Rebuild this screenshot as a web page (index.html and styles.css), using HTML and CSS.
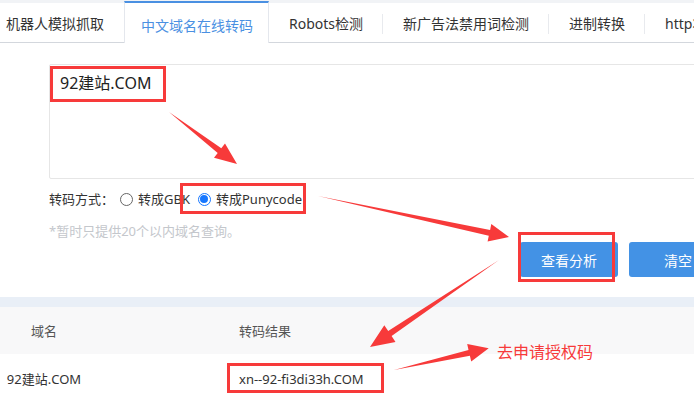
FILE: index.html
```html
<!DOCTYPE html>
<html lang="zh-CN">
<head>
<meta charset="utf-8">
<title>中文域名在线转码</title>
<link rel="stylesheet" href="styles.css">
</head>
<body>
<div class="page">
  <nav class="tabbar">
    <div class="tabs">
      <div class="tab">机器人模拟抓取</div>
      <div class="tab active">中文域名在线转码</div>
      <div class="tab sep">Robots检测</div>
      <div class="tab sep">新广告法禁用词检测</div>
      <div class="tab sep">进制转换</div>
      <div class="tab">http状态查询</div>
    </div>
  </nav>

  <section class="form">
    <div class="textarea">92建站.COM</div>
    <div class="opts">
      <span class="label">转码方式：</span>
      <span class="radio"></span><span class="rtext">转成GBK</span>
      <span class="radio on"></span><span class="rtext">转成Punycode</span>
    </div>
    <div class="hint">*暂时只提供20个以内域名查询。</div>
    <div class="btns">
      <button class="btn">查看分析</button>
      <button class="btn">清空</button>
    </div>
  </section>

  <div class="band"></div>

  <div class="table">
    <div class="thead">
      <div class="c1">域名</div>
      <div class="c2">转码结果</div>
    </div>
    <div class="trow">
      <div class="c1">92建站.COM</div>
      <div class="c2">xn--92-fi3di33h.COM</div>
    </div>
  </div>

  <div class="note">
    <div class="mark m1"></div>
    <div class="mark m2"></div>
    <div class="mark m3"></div>
    <div class="mark m4"></div>
    <div class="callout">去申请授权码</div>
    <svg class="arrows" width="694" height="399" viewBox="0 0 694 399">
      <polygon points="169,112 221.3,148.2 225,143.5 237,164 214,157.7 217.7,153"/>
      <polygon points="318,196 490.1,229.9 491.3,224 509,237 487.6,241.6 488.8,235.7"/>
      <polygon points="499,260 388.2,331.1 384.3,325.3 370,347 395.5,341.9 391.6,336.1"/>
      <polygon points="394,370 468.5,349.9 467.2,344 488.7,348.3 471.2,361.6 469.9,355.7"/>
    </svg>
  </div>
</div>
</body>
</html>
```

FILE: styles.css
```css
* { box-sizing: border-box; }
html, body { margin: 0; padding: 0; background: #fff; }
body {
  font-family: "Noto Sans", "Noto Sans CJK SC", sans-serif;
  color: #333;
  overflow: hidden;
  width: 694px;
  height: 399px;
}
.page { position: relative; width: 694px; height: 399px; overflow: hidden; }

.tabbar {
  border-top: 3px solid #f1f3f6;
  border-bottom: 1px solid #d3d7dd;
  height: 43px;
  overflow: visible;
}
.tabs {
  display: flex;
  height: 39px;
  margin-left: -14px;
  white-space: nowrap;
}
.tab {
  position: relative;
  display: flex;
  align-items: center;
  padding: 3px 20px 0;
  font-size: 14px;
  line-height: 20px;
  color: #333;
}
.tab.active {
  margin-top: -2px;
  height: 42px;
  padding: 5px 15px 0 16px;
  border-top: 2px solid #4a90e2;
  border-left: 1px solid #e4e7ed;
  border-right: 1px solid #e4e7ed;
  background: #fff;
  color: #4a90e2;
}
.tab.sep::after {
  content: "";
  position: absolute;
  right: 0;
  top: 11px;
  height: 20px;
  width: 1px;
  background: #e8eaee;
}

.form { padding: 21px 0 0 49px; }
.textarea {
  width: 700px;
  height: 115px;
  border: 1px solid #e6e6e6;
  border-radius: 2px;
  padding: 6px 10px;
  font-size: 16px;
  line-height: 24px;
  color: #222;
}
.opts {
  display: flex;
  align-items: center;
  margin-top: 10px;
  height: 20px;
  font-size: 13px;
  line-height: 20px;
  color: #333;
}
.label { margin-right: 6px; }
.radio {
  width: 13px;
  height: 13px;
  border: 1px solid #666;
  border-radius: 50%;
  margin-right: 5px;
  display: inline-flex;
  align-items: center;
  justify-content: center;
  background: #fff;
}
.radio.on { border-color: #1677ff; }
.radio.on::after {
  content: "";
  width: 8px;
  height: 8px;
  border-radius: 50%;
  background: #1677ff;
}
.rtext { margin-right: 8px; }
.hint {
  margin-top: 12px;
  font-size: 13px;
  line-height: 20px;
  color: #c4c7cc;
}
.btns {
  display: flex;
  gap: 11px;
  margin-top: 1px;
  padding-left: 471px;
}
.btn {
  flex: 0 0 98px;
  height: 35px;
  border: 0;
  border-radius: 3px;
  background: #4392e5;
  color: #fff;
  font-family: inherit;
  font-size: 14px;
  padding: 0;
}

.band {
  margin-top: 20px;
  height: 10px;
  background: #e9eff7;
}
.table { font-size: 13px; line-height: 20px; }
.thead, .trow { display: grid; grid-template-columns: 88px 1fr; }
.thead { height: 47px; align-items: center; background: #f8f8f9; color: #555; }
.trow { height: 50px; align-items: center; color: #333; }
.c1 { text-align: center; }
.c2 { padding-left: 151px; }

.note { position: absolute; inset: 0; pointer-events: none; }
.mark { position: absolute; border: 3px solid #f73a3a; }
.m1 { left: 50px; top: 66px; width: 116px; height: 36px; }
.m2 { left: 180px; top: 183px; width: 126px; height: 31px; }
.m3 { left: 518px; top: 232px; width: 97px; height: 50px; }
.m4 { left: 227px; top: 363px; width: 157px; height: 30px; }
.callout {
  position: absolute;
  left: 497px;
  top: 341px;
  font-size: 16px;
  line-height: 22px;
  color: #f73a3a;
}
.arrows { position: absolute; left: 0; top: 0; fill: #f73a3a; }
```
